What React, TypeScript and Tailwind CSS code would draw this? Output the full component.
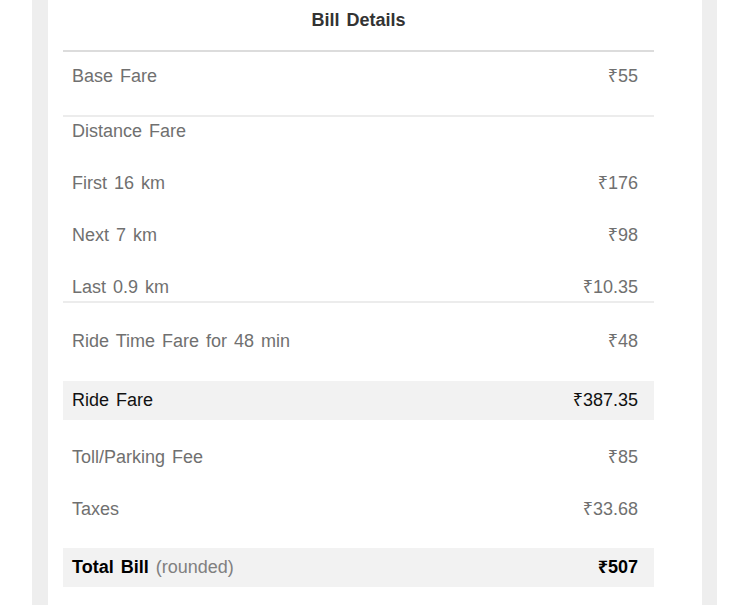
import React from "react"

interface Line {
  label: string
  amount?: string
}

const distanceLines: Line[] = [
  { label: "First 16 km", amount: "₹176" },
  { label: "Next 7 km", amount: "₹98" },
  { label: "Last 0.9 km", amount: "₹10.35" },
]

const extraLines: Line[] = [
  { label: "Toll/Parking Fee", amount: "₹85" },
  { label: "Taxes", amount: "₹33.68" },
]

function Row({ label, amount }: Line) {
  return (
    <div className="flex items-center justify-between pl-[9px] pr-[16px] leading-[22px] text-[#707070]">
      <span>{label}</span>
      {amount && <span>{amount}</span>}
    </div>
  )
}

export default function App() {
  return (
    <div
      className="bg-white pl-8 text-[18px] [word-spacing:2px]"
      style={{ fontFamily: '"Liberation Sans", Arial, "Noto Sans", "DejaVu Sans", sans-serif' }}
    >
      <div className="w-[685px] border-l-[16px] border-r-[15px] border-[#eeeeee] bg-white pl-[15px] pr-[48px] pb-[18px]">
        {/* Header */}
        <div className="h-[50px] pt-[9px] text-center font-bold leading-[22px] text-[#333333]">Bill Details</div>
        <div className="h-[2px] bg-[#dcdcdc]" />

        {/* Base fare */}
        <div className="h-[63px] pt-[13px]">
          <Row label="Base Fare" amount="₹55" />
        </div>
        <div className="h-[2px] bg-[#ececec]" />

        {/* Distance fare */}
        <div className="flex flex-col gap-[30px] pt-[3px] pb-[3px]">
          <Row label="Distance Fare" />
          {distanceLines.map((line) => (
            <Row key={line.label} {...line} />
          ))}
        </div>
        <div className="h-[2px] bg-[#ececec]" />

        <div className="pt-[27px] pb-[29px]">
          <Row label="Ride Time Fare for 48 min" amount="₹48" />
        </div>

        <div className="flex h-[39px] items-center justify-between bg-[#f2f2f2] pl-[9px] pr-[16px] text-[#111111]">
          <span>Ride Fare</span>
          <span>₹387.35</span>
        </div>

        <div className="flex flex-col gap-[30px] pt-[26px] pb-[28px]">
          {extraLines.map((line) => (
            <Row key={line.label} {...line} />
          ))}
        </div>

        {/* Total */}
        <div className="flex h-[39px] items-center justify-between bg-[#f2f2f2] pl-[9px] pr-[16px] text-black">
          <span>
            <span className="font-bold">Total Bill</span> <span className="text-[#808080]">(rounded)</span>
          </span>
          <span className="font-bold">₹507</span>
        </div>
      </div>
    </div>
  )
}
